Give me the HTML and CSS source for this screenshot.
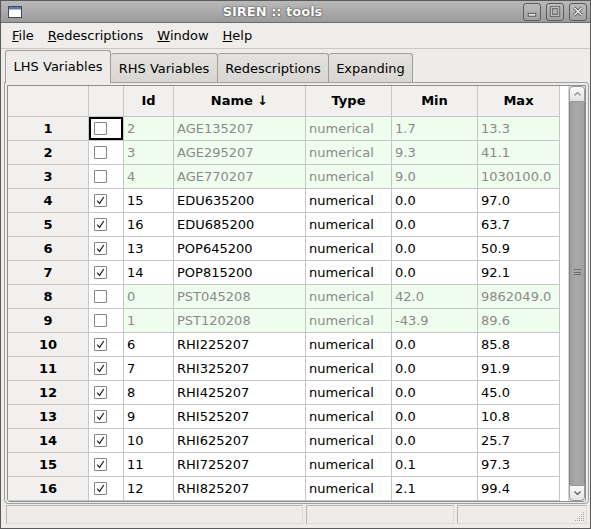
FILE: index.html
```html
<!DOCTYPE html>
<html>
<head>
<meta charset="utf-8">
<link rel="stylesheet" href="styles.css">
</head>
<body>
<div class="window">
  <div class="titlebar">
    <div class="ticon">
      <svg width="14" height="12" viewBox="0 0 14 12"><rect x="0.5" y="0.5" width="13" height="11" fill="#fff" stroke="#3d4a5c"/><rect x="1" y="1" width="12" height="2.5" fill="#5b7fb4"/></svg>
    </div>
    <div class="title">SIREN :: tools</div>
    <div class="tbtns">
      <div class="tbtn"><svg width="17" height="17" viewBox="0 0 17 17"><rect x="4.5" y="10.5" width="8" height="3" fill="#e6e6e6" stroke="#555"/></svg></div>
      <div class="tbtn"><svg width="17" height="17" viewBox="0 0 17 17"><rect x="4.5" y="4.5" width="8" height="8" fill="none" stroke="#555" stroke-width="3"/><rect x="4.5" y="4.5" width="8" height="8" fill="none" stroke="#e6e6e6" stroke-width="1"/></svg></div>
      <div class="tbtn"><svg width="17" height="17" viewBox="0 0 17 17"><path d="M4.5 4.5 L12.5 12.5 M12.5 4.5 L4.5 12.5" stroke="#555" stroke-width="3.4"/><path d="M4.5 4.5 L12.5 12.5 M12.5 4.5 L4.5 12.5" stroke="#ececec" stroke-width="1.6"/></svg></div>
    </div>
  </div>
  <div class="menubar">
    <span class="mi"><u>F</u>ile</span>
    <span class="mi"><u>R</u>edescriptions</span>
    <span class="mi"><u>W</u>indow</span>
    <span class="mi"><u>H</u>elp</span>
  </div>
  <div class="tabs">
    <div class="tab active">LHS Variables</div>
    <div class="tab">RHS Variables</div>
    <div class="tab">Redescriptions</div>
    <div class="tab">Expanding</div>
  </div>
  <div class="panel">
    <div class="gridframe">
      <div class="grid" id="grid">
        <div class="row head">
          <div class="c c0"></div>
          <div class="c c1"></div>
          <div class="c c2">Id</div>
          <div class="c c3">Name ↓</div>
          <div class="c c4">Type</div>
          <div class="c c5">Min</div>
          <div class="c c6">Max</div>
        </div>
      </div>
      <div class="vscroll">
        <div class="sbtn up"><svg width="9" height="6" viewBox="0 0 9 6"><path d="M1.5 4.5 L4.5 1.5 L7.5 4.5" fill="none" stroke="#8a8a8a" stroke-width="1.2"/></svg></div>
        <div class="thumb"><div class="grip"></div></div>
        <div class="sbtn down"><svg width="9" height="6" viewBox="0 0 9 6"><path d="M1.5 1.5 L4.5 4.5 L7.5 1.5" fill="none" stroke="#555" stroke-width="1.2"/></svg></div>
      </div>
    </div>
  </div>
  <div class="status">
    <div class="seg s1"></div>
    <div class="seg s2"></div>
    <div class="seg s3"><svg class="rgrip" width="11" height="11" viewBox="0 0 11 11"><g fill="#a8a7a5"><rect x="9" y="1" width="1" height="1"/><rect x="7" y="3" width="1" height="1"/><rect x="9" y="3" width="1" height="1"/><rect x="5" y="5" width="1" height="1"/><rect x="7" y="5" width="1" height="1"/><rect x="9" y="5" width="1" height="1"/><rect x="3" y="7" width="1" height="1"/><rect x="5" y="7" width="1" height="1"/><rect x="7" y="7" width="1" height="1"/><rect x="9" y="7" width="1" height="1"/><rect x="1" y="9" width="1" height="1"/><rect x="3" y="9" width="1" height="1"/><rect x="5" y="9" width="1" height="1"/><rect x="7" y="9" width="1" height="1"/><rect x="9" y="9" width="1" height="1"/></g></svg></div>
  </div>
</div>
<script src="app.js"></script>
</body>
</html>
```
FILE: app.js
```javascript
var data = [
  [0, 2, "AGE135207", "1.7", "13.3"],
  [0, 3, "AGE295207", "9.3", "41.1"],
  [0, 4, "AGE770207", "9.0", "1030100.0"],
  [1, 15, "EDU635200", "0.0", "97.0"],
  [1, 16, "EDU685200", "0.0", "63.7"],
  [1, 13, "POP645200", "0.0", "50.9"],
  [1, 14, "POP815200", "0.0", "92.1"],
  [0, 0, "PST045208", "42.0", "9862049.0"],
  [0, 1, "PST120208", "-43.9", "89.6"],
  [1, 6, "RHI225207", "0.0", "85.8"],
  [1, 7, "RHI325207", "0.0", "91.9"],
  [1, 8, "RHI425207", "0.0", "45.0"],
  [1, 9, "RHI525207", "0.0", "10.8"],
  [1, 10, "RHI625207", "0.0", "25.7"],
  [1, 11, "RHI725207", "0.1", "97.3"],
  [1, 12, "RHI825207", "2.1", "99.4"]
];
var grid = document.getElementById("grid");
var check = '<svg width="13" height="13" viewBox="0 0 13 13"><path d="M3.2 6.6 L5.6 9.4 L9.8 3" fill="none" stroke="#222" stroke-width="1.2"/></svg>';
data.forEach(function (d, i) {
  var row = document.createElement("div");
  row.className = "row" + (d[0] ? "" : " off");
  row.innerHTML =
    '<div class="c c0">' + (i + 1) + '</div>' +
    '<div class="c c1' + (i === 0 ? ' focus' : '') + '"><span class="cb">' + (d[0] ? check : '') + '</span></div>' +
    '<div class="c c2">' + d[1] + '</div>' +
    '<div class="c c3">' + d[2] + '</div>' +
    '<div class="c c4">numerical</div>' +
    '<div class="c c5">' + d[3] + '</div>' +
    '<div class="c c6">' + d[4] + '</div>';
  grid.appendChild(row);
});
```
FILE: styles.css
```css
* { box-sizing: border-box; }
html, body { margin: 0; padding: 0; }
body {
  width: 591px;
  height: 529px;
  overflow: hidden;
  font-family: "DejaVu Sans", "Liberation Sans", sans-serif;
  font-size: 13px;
  color: #000;
}
.window {
  width: 591px;
  height: 529px;
  border: 1px solid #5a5a5a;
  background: #edeceb;
  display: flex;
  flex-direction: column;
}
.titlebar {
  height: 22px;
  flex: none;
  display: flex;
  align-items: center;
  padding: 0 3px 0 7px;
  background: linear-gradient(#b9b9b9, #9a9a9a);
  border-bottom: 1px solid #6a6a6a;
}
.ticon { width: 14px; height: 12px; display: flex; margin-top: 1px; }
.title {
  flex: 1;
  text-align: center;
  font-weight: bold;
  font-size: 13px;
  color: #fff;
  text-shadow: 0 0 1px #333, 0 0 2px #444;
  margin-top: -1px;
}
.tbtns { display: flex; gap: 5px; }
.tbtn {
  width: 18px;
  height: 18px;
  border: 1px solid #5d5d5d;
  border-radius: 3px;
  background: linear-gradient(#bdbdbd, #a2a2a2);
  display: flex;
  align-items: center;
  justify-content: center;
}
.tbtn svg { display: block; }
.menubar {
  height: 26px;
  flex: none;
  display: flex;
  align-items: center;
  padding-left: 4px;
  border-bottom: 1px solid #c9c8c6;
  background: #eeedec;
}
.mi { padding: 0 7px; line-height: 16px; }
.mi u { text-decoration-thickness: 1px; text-underline-offset: 1px; }
.tabs {
  flex: none;
  height: 32px;
  margin-top: 1px;
  display: flex;
  align-items: flex-end;
  padding-left: 4px;
}
.tab {
  height: 29px;
  border: 1px solid #9e9d9b;
  border-bottom: none;
  border-left: none;
  border-radius: 3px 3px 0 0;
  background: linear-gradient(#e4e2df, #d8d6d2);
  padding: 0 7px;
  display: flex;
  align-items: center;
  justify-content: center;
  padding-top: 1px;
}
.tab.active {
  height: 33px;
  margin-bottom: -1px;
  border-left: 1px solid #9e9d9b;
  background: #edeceb;
  position: relative;
  z-index: 1;
  width: 106px;
  padding-top: 0;
  padding-bottom: 2px;
}
.tab:nth-child(2) { width: 107px; }
.tab:nth-child(3) { width: 111px; }
.tab:nth-child(4) { width: 84px; }
.panel {
  flex: none;
  height: 422px;
  margin: 0 1px 0 3px;
  border: 1px solid #a09f9d;
  border-radius: 0 3px 4px 4px;
  padding: 2px 2px 1px 2px;
  background: #edeceb;
}
.gridframe {
  height: 417px;
  border: 1px solid #8e8e8e;
  border-radius: 0 0 3px 3px;
  background: #fff;
  display: flex;
}
.grid {
  width: 560px;
  flex: none;
  background: #fff;
}
.row {
  display: flex;
  height: 24px;
  border-bottom: 1px solid #c6c6c6;
  width: 552px;
}
.row.head { height: 31px; background: #f1f0ef; }
.c {
  border-right: 1px solid #c6c6c6;
  height: 100%;
  display: flex;
  align-items: center;
  padding-left: 3px;
  padding-bottom: 1px;
  white-space: nowrap;
  overflow: hidden;
}
.c0 { width: 81px; justify-content: center; padding-left: 0; font-weight: bold; background: #f1f0ef; }
.c1 { width: 35px; padding-left: 5px; }
.c2 { width: 50px; }
.c3 { width: 132px; }
.c4 { width: 86px; }
.c5 { width: 86px; }
.c6 { width: 82px; }
.head .c { justify-content: center; padding-left: 0; font-weight: bold; padding-bottom: 2px; }
.off .c2, .off .c3, .off .c4, .off .c5, .off .c6 { background: #effdef; color: #8a8a8a; }
.focus { box-shadow: inset 0 0 0 2px #000; }
.cb {
  width: 13px;
  height: 13px;
  border: 1px solid #868686;
  border-radius: 1px;
  background: #fff;
  display: flex;
  align-items: center;
  justify-content: center;
}
.cb svg { display: block; margin: -1px; }
.vscroll {
  width: 17px;
  flex: none;
  display: flex;
  flex-direction: column;
  background: #e6e5e3;
  border-left: 1px solid #d6d5d3;
}
.sbtn {
  height: 16px;
  flex: none;
  border: 1px solid #9a9a9a;
  background: linear-gradient(#fafafa, #e3e3e3);
  display: flex;
  align-items: center;
  justify-content: center;
}
.sbtn.up { border-radius: 4px 4px 0 0; }
.sbtn.down { border-radius: 0 0 4px 4px; }
.thumb {
  flex: 1;
  background: linear-gradient(90deg, #9c9c9c, #a9a9a9 40%, #a3a3a3);
  border: 1px solid #858585;
  border-top: none;
  border-bottom: none;
  display: flex;
  align-items: center;
  justify-content: center;
}
.grip {
  width: 7px;
  height: 6px;
  margin-bottom: 44px;
  border-top: 1px solid #6e6e6e;
  border-bottom: 1px solid #6e6e6e;
  position: relative;
}
.grip::after {
  content: "";
  position: absolute;
  left: 0;
  right: 0;
  top: 2px;
  height: 1px;
  background: #6e6e6e;
}
.status {
  flex: none;
  height: 19px;
  margin-top: 1px;
  display: flex;
  padding-left: 5px;
}
.seg {
  height: 19px;
  border: 1px solid #b7b6b4;
  border-bottom-color: #dcdbd9;
  border-right-color: #dcdbd9;
  background: #edeceb;
}
.s1 { width: 297px; }
.s2 { width: 148px; margin-left: 3px; }
.s3 { width: 130px; margin-left: 3px; position: relative; }
.rgrip { position: absolute; right: 1px; bottom: 1px; }
```
